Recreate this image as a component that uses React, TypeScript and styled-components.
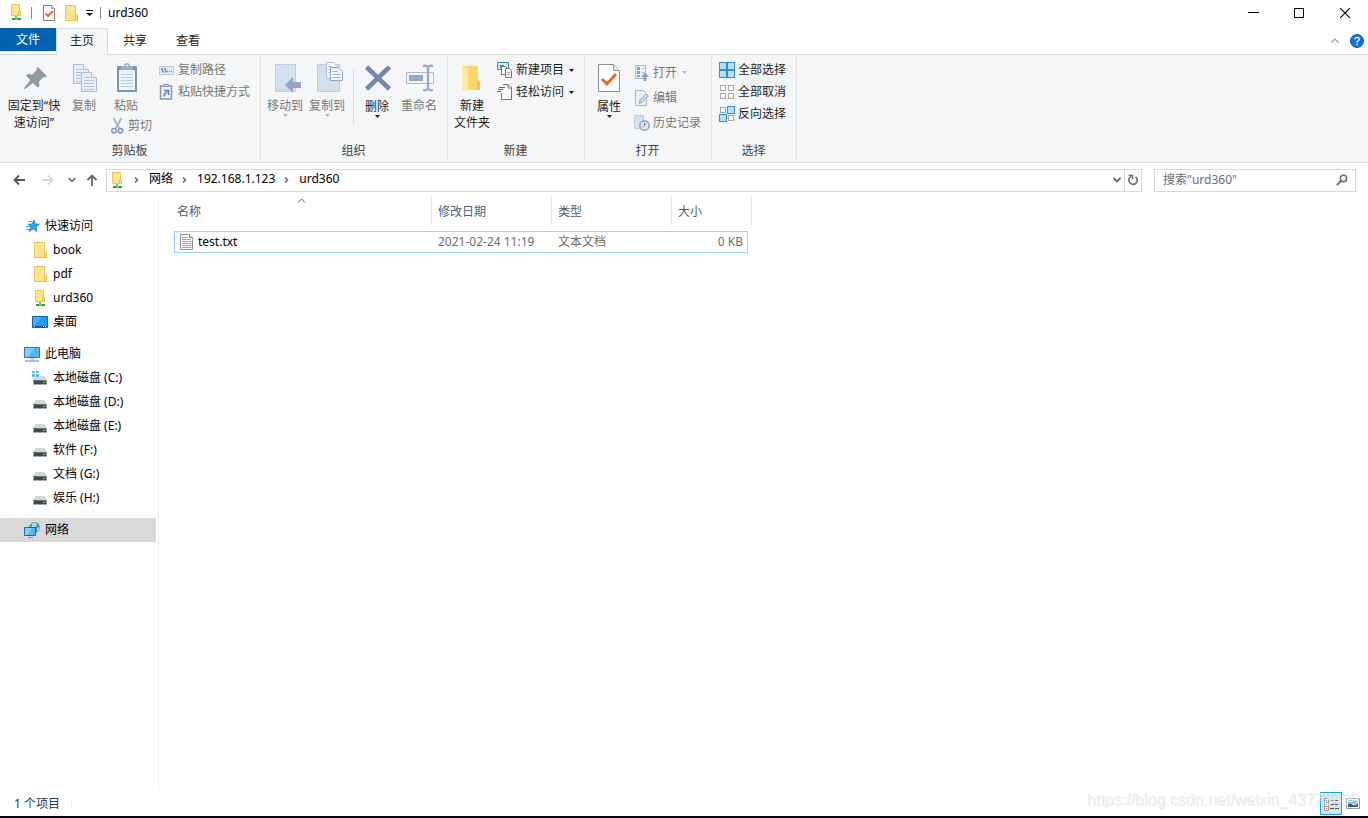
import React from "react";
import styled, { createGlobalStyle, css } from "styled-components";

const GlobalStyle = createGlobalStyle`
  * { box-sizing: border-box; }
  body {
    margin: 0;
    background: #fff;
    color: #000;
    font: 12px/16px "Noto Sans", "Noto Sans CJK SC", sans-serif;
  }
  button, input { font: inherit; color: inherit; }
  svg { display: block; flex: none; }
`;

/* ---------- shared ---------- */

const line = "#dadbdc";

const PlainButton = styled.button`
  display: flex;
  align-items: center;
  margin: 0;
  padding: 0;
  border: 0;
  background: none;
  white-space: nowrap;
`;

/* ---------- window frame ---------- */

const Window = styled.div`
  display: flex;
  flex-direction: column;
  min-height: 100vh;
  border-bottom: 2px solid #05060c;
`;

const TitleBar = styled.header`
  display: flex;
  height: 28px;
`;

const QuickAccess = styled.div`
  display: flex;
  align-items: center;
  flex: 1;
  height: 25px;
  padding-left: 8px;
`;

const QuickButton = styled(PlainButton)<{ $w: number }>`
  justify-content: center;
  width: ${(p) => p.$w}px;
  height: 20px;
`;

const QuickDivider = styled.span<{ $wide?: boolean }>`
  width: 1px;
  height: 12px;
  margin: 0 ${(p) => (p.$wide ? 10 : 7)}px 0 7px;
  background: #8a8a8a;
`;

const Title = styled.h1`
  margin: 0;
  font-size: 12px;
  font-weight: 400;
`;

const CaptionButton = styled(PlainButton)`
  justify-content: center;
  width: 46px;
  height: 25px;
`;

/* ---------- ribbon tabs ---------- */

const TabRow = styled.nav`
  display: flex;
  height: 27px;
  border-bottom: 1px solid ${line};
`;

const FileTab = styled(PlainButton)`
  justify-content: center;
  width: 56px;
  height: 23px;
  padding-top: 1px;
  background: #0063b1;
  color: #fff;
`;

const TabList = styled.div`
  display: flex;
  flex: 1;
  gap: 1px;
`;

const Tab = styled(PlainButton)<{ $active?: boolean }>`
  justify-content: center;
  width: 52px;
  height: 27px;
  padding-bottom: 2px;
  border: 1px solid transparent;
  border-bottom: 0;
  color: #262626;
  ${(p) =>
    p.$active &&
    css`
      border-color: ${line};
      background: #f5f6f7;
    `}
`;

const TabTools = styled.div`
  display: flex;
  align-items: center;
  gap: 10px;
  padding-right: 4px;
`;

/* ---------- ribbon ---------- */

const Ribbon = styled.div`
  display: flex;
  height: 108px;
  padding: 2px 0 3px;
  border-bottom: 1px solid ${line};
  background: #f5f6f7;
`;

const Group = styled.section<{ $w: number; $pad: number }>`
  display: flex;
  flex-direction: column;
  width: ${(p) => p.$w}px;
  padding-left: ${(p) => p.$pad}px;
  border-right: 1px solid #e2e3e4;
`;

const GroupBody = styled.div`
  display: flex;
  flex: 1;
`;

const GroupLabel = styled.h2<{ $pad: number }>`
  margin: 0 1px 0 -${(p) => p.$pad}px;
  color: #444;
  font-size: 12px;
  font-weight: 400;
  text-align: center;
`;

const BigTool = styled(PlainButton)<{ $w: number; $muted?: boolean; $drop?: boolean }>`
  flex-direction: column;
  width: ${(p) => p.$w}px;
  height: 76px;
  padding-top: 5px;
  color: ${(p) => (p.$muted ? "#767676" : "#1e1e1e")};
  line-height: 17px;
`;

const BigText = styled.span<{ $low?: boolean }>`
  margin-top: ${(p) => (p.$low ? 4 : 3)}px;
`;

const PasteStack = styled.div`
  display: flex;
  flex-direction: column;
  width: 50px;
`;

const PasteTool = styled(BigTool)`
  height: 59px;
`;

const ToolColumn = styled.div<{ $pitch: number; $left: number; $top: number }>`
  display: grid;
  grid-auto-rows: ${(p) => p.$pitch}px;
  align-content: start;
  justify-items: start;
  margin-left: ${(p) => p.$left}px;
  padding-top: ${(p) => p.$top}px;
`;

const SmallTool = styled(PlainButton)<{ $muted?: boolean }>`
  gap: 3px;
  color: ${(p) => (p.$muted ? "#767676" : "#1e1e1e")};
`;

const SmallCaret = styled.span`
  margin-left: 2px;
`;

const InnerDivider = styled.span`
  width: 1px;
  height: 55px;
  margin: 13px 2px 0 5px;
  background: #dcdddf;
`;

/* ---------- address bar ---------- */

const AddressRow = styled.div`
  display: flex;
  align-items: center;
  height: 34px;
  padding: 0 12px 0 8px;
`;

const NavButton = styled(PlainButton)<{ $w: number }>`
  justify-content: center;
  width: ${(p) => p.$w}px;
  height: 22px;
`;

const AddressBox = styled.div`
  display: flex;
  align-items: center;
  flex: 1;
  height: 23px;
  padding-left: 2px;
  border: 1px solid #d9d9d9;
`;

const Crumbs = styled.ol`
  display: flex;
  align-items: center;
  flex: 1;
  margin: 0;
  padding: 0 0 2px;
  list-style: none;
`;

const Crumb = styled.li`
  display: flex;
  align-items: center;

  svg { margin: 2px 10px 0 9px; }
`;

const CrumbLink = styled.a`
  color: inherit;
  text-decoration: none;
`;

const AddressButton = styled(PlainButton)<{ $divided?: boolean }>`
  justify-content: center;
  width: ${(p) => (p.$divided ? 17 : 14)}px;
  height: 21px;
  border-left: ${(p) => (p.$divided ? "1px solid #d9d9d9" : "0")};
`;

const SearchBox = styled.label`
  display: flex;
  align-items: center;
  width: 202px;
  height: 23px;
  margin-left: 12px;
  padding: 0 7px 0 8px;
  border: 1px solid #d9d9d9;
`;

const SearchInput = styled.input`
  flex: 1;
  min-width: 0;
  padding: 0;
  border: 0;
  outline: 0;
  background: none;

  &::placeholder { color: #6d6d6d; opacity: 1; }
`;

/* ---------- content ---------- */

const Main = styled.main`
  display: flex;
  flex: 1;
`;

const Sidebar = styled.nav`
  width: 159px;
  padding: 17px 2px 0 0;
  border-right: 1px solid #f0f0f0;
`;

const Tree = styled.ul`
  margin: 0 0 8px;
  padding: 0;
  list-style: none;
`;

const TreeLink = styled.a<{ $child?: boolean; $selected?: boolean }>`
  display: flex;
  align-items: center;
  gap: 5px;
  height: 24px;
  padding-left: ${(p) => (p.$child ? 32 : 24)}px;
  background: ${(p) => (p.$selected ? "#d9d9d9" : "none")};
  color: #000;
  text-decoration: none;
`;

const TreeText = styled.span`
  padding-bottom: 1px;
`;

const FilePane = styled.section`
  flex: 1;
`;

const FileTable = styled.table`
  display: block;
`;

const TableHead = styled.thead`
  display: block;
`;

const TableBody = styled.tbody`
  display: block;
`;

const HeadRow = styled.tr`
  display: grid;
  grid-template-columns: 261px 120px 120px 80px;
  margin-left: 12px;
`;

const HeadCell = styled.th`
  position: relative;
  height: 28px;
  padding: 7px 6px 5px;
  border-right: 1px solid #e5e5e5;
  color: #4c607a;
  font-weight: 400;
  text-align: left;
`;

const SortMark = styled.span`
  position: absolute;
  top: 1px;
  left: 50%;
  margin-left: -4px;
`;

const FileRow = styled.tr`
  display: grid;
  grid-template-columns: 257px 120px 120px 75px;
  width: 574px;
  height: 22px;
  margin: 6px 0 0 15px;
  border: 1px solid #99d1ff;
`;

const FileCell = styled.td<{ $end?: boolean }>`
  padding: ${(p) => (p.$end ? "2px 4px" : "2px 6px")};
  color: #6d6d6d;
  text-align: ${(p) => (p.$end ? "right" : "left")};
`;

const NameCell = styled(FileCell)`
  display: flex;
  align-items: center;
  gap: 5px;
  padding: 0 5px;
  color: #000;
`;

/* ---------- status bar ---------- */

const StatusBar = styled.footer`
  position: relative;
  display: flex;
  align-items: center;
  height: 25px;
  padding: 0 4px 0 14px;
  color: #1e395b;
`;

const StatusText = styled.span`
  flex: 1;
`;

const StatusCount = styled.span`
  display: inline-block;
  padding-right: 11px;
  border-right: 1px solid #f0f0f0;
  line-height: 12px;
`;

const ViewButton = styled(PlainButton)<{ $active?: boolean }>`
  justify-content: center;
  width: 22px;
  height: 23px;
  border: 1px solid ${(p) => (p.$active ? "#26a0da" : "transparent")};
  background: ${(p) => (p.$active ? "#cbe8f6" : "none")};
`;

const Watermark = styled.span`
  position: absolute;
  right: 9px;
  bottom: 7px;
  color: rgba(240, 240, 240, 0.8);
  font: 16px/18px "Liberation Sans", Arial, sans-serif;
  text-shadow: 1px 1px 0 rgba(190, 190, 190, 0.35);
  pointer-events: none;
`;

/* ---------- icons ---------- */

const FolderIcon = () => (
  <svg width="16" height="16" viewBox="0 0 16 16">
    <path d="M2.500.5h10v9.500h2v5.500h-12z" fill="#ffe38f" stroke="#ecc54e" />
    <path d="M12.500 15.500v-5l1-1 1 1v5z" fill="#fbe9a8" stroke="#e8bd3c" />
  </svg>
);

const NetFolderIcon = () => (
  <svg width="16" height="17" viewBox="0 0 16 17">
    <path d="M3.500.5h8v7h1v4h-9z" fill="#ffe38f" stroke="#ecc54e" />
    <path d="M10.500 11v-3l1-1 1 1v3z" fill="#fbe9a8" stroke="#e8bd3c" />
    <path d="M7 12h2v2h-2z" fill="#5bd052" />
    <path d="M4 14h9v2H4z" fill="#2aa52e" />
    <path d="M7 14h3v2H7z" fill="#5bd052" />
  </svg>
);

const SmallCheckDocIcon = () => (
  <svg width="12" height="16" viewBox="0 0 12 16">
    <path d="M.5.5h8l3 3v12H.5z" fill="#fcfcfc" stroke="#7d7d7d" />
    <path d="M8.500.5v3h3" fill="#e8e8e8" stroke="#9a9a9a" />
    <path d="M2.500 8.500L5 11l5-5" fill="none" stroke="#f26522" strokeWidth="1.900" />
  </svg>
);

const CheckDocIcon = () => (
  <svg width="22" height="32" viewBox="0 0 22 32">
    <path d="M.5 2.500h15l6 6v21H.5z" fill="#fcfcfc" stroke="#8b8b8b" />
    <path d="M15.500 2.500v6h6" fill="#e8e8e8" stroke="#9a9a9a" />
    <path d="M4 17l5 5 9-10" fill="none" stroke="#f26522" strokeWidth="2.800" />
  </svg>
);

const Caret = ({ color = "#1e1e1e" }: { color?: string }) => (
  <svg width="5" height="3" viewBox="0 0 5 3"><path d="M0 0h5L2.500 3z" fill={color} /></svg>
);

const CustomizeIcon = () => (
  <svg width="7" height="6" viewBox="0 0 7 6"><path d="M0 0h7v1H0zM0 3h7L3.500 6z" fill="#111" /></svg>
);

const PinIcon = () => (
  <svg width="32" height="32" viewBox="0 0 32 32">
    <path d="M20 5l9 9-2 1.500-1.500-.5-4.500 4.500.5 4.500-2 1.500-4.500-4.500L7 27H6v-1l6.500-8L8 13.500 9.500 12l5 .5 4.500-5-.5-1.500z" fill="#8f9aa1" />
  </svg>
);

const page = (x: number, y: number) => (
  <g transform={`translate(${x} ${y})`}>
    <path d="M.5.5h10l5 5v14H.5z" fill="#e8eef8" stroke="#a9bbd7" />
    <path d="M10.500.5v5h5" fill="#f5f8fc" stroke="#a9bbd7" />
    <path d="M3 5.500h6M3 8.500h10M3 11.500h10M3 14.500h10M3 17.500h10" stroke="#b2c2dc" />
  </g>
);

const CopyIcon = () => (
  <svg width="32" height="32" viewBox="0 0 32 32">{page(5, 2)}{page(13, 10)}</svg>
);

const PasteIcon = () => (
  <svg width="32" height="32" viewBox="0 0 32 32">
    <g transform="translate(1 0)">
      <rect x="6" y="4" width="20" height="26" rx="1" fill="#7c92b9" />
      <path d="M8 8h16v20H8z" fill="#edf2fa" />
      <path d="M10 12.500h12M10 15.500h12M10 18.500h12M10 21.500h12M10 24.500h12" stroke="#c0cde2" />
      <path d="M10 4h3c0-4 6-4 6 0h3v4H10z" fill="#9eafc9" />
      <circle cx="16" cy="3.500" r="1" fill="#eef2f8" />
    </g>
  </svg>
);

const ScissorsIcon = () => (
  <svg width="14" height="16" viewBox="0 0 14 16">
    <path d="M2.500 0l6 10.500M10.500 0l-6 10.500" stroke="#a3b2cb" strokeWidth="1.800" />
    <circle cx="3" cy="12.700" r="2.200" fill="none" stroke="#8297bb" strokeWidth="1.600" />
    <circle cx="9.500" cy="12.700" r="2.200" fill="none" stroke="#8297bb" strokeWidth="1.600" />
  </svg>
);

const PathIcon = () => (
  <svg width="16" height="16" viewBox="0 0 16 16">
    <path d="M.5 4.500h14v8H.5z" fill="#dfe8f5" stroke="#bccbe2" />
    <path d="M2.500 6l2 4.500M5.500 6l2 4.500" stroke="#667fab" strokeWidth="1.300" />
    <path d="M8 9h1v1H8zM10 9h1v1h-1zM12 9h1v1h-1z" fill="#667fab" />
  </svg>
);

const PasteShortcutIcon = () => (
  <svg width="16" height="16" viewBox="0 0 16 16">
    <path d="M1.500 2h11v13h-11z" fill="#eef3fa" stroke="#8196bb" strokeWidth="1.500" />
    <path d="M4.500.500h5v2h-5z" fill="#b5c3da" stroke="#8fa2c3" />
    <path d="M5 12.500c0-2 .5-3 3-5M5 6.500h4.500v4.500" fill="none" stroke="#5f7cb0" strokeWidth="1.600" />
  </svg>
);

const MoveToIcon = () => (
  <svg width="32" height="32" viewBox="0 0 32 32">
    <path d="M6.500 2.500h20v27h-20z" fill="#d5e0ef" stroke="#bdcce2" />
    <path d="M6.500 27.500h20" stroke="#c5d2e6" />
    <path d="M16 23l8-8v5h8v6h-8v5z" fill="#94a7c7" />
  </svg>
);

const CopyToIcon = () => (
  <svg width="32" height="32" viewBox="0 0 32 32">
    <path d="M6.500 2.500h22v27h-22z" fill="#d5e0ef" stroke="#bdcce2" />
    <path d="M15.500.5h7l4 4v12h-11z" fill="#f1f5fa" stroke="#a9bbd7" />
    <path d="M19.500 5.500h8l4 4v9h-12z" fill="#f1f5fa" stroke="#8fa4c8" />
    <path d="M17.500 4.500h3M17.500 7.500h2M17.500 10.500h2M21.500 9.500h5M21.500 12.500h8M21.500 15.500h8" stroke="#9cafce" />
  </svg>
);

const DeleteIcon = () => (
  <svg width="32" height="32" viewBox="0 0 32 32">
    <path d="M5.500 5l23 22M28.500 5l-23 22" stroke="#7387ad" strokeWidth="4.500" />
  </svg>
);

const RenameIcon = () => (
  <svg width="32" height="32" viewBox="0 0 32 32">
    <path d="M3.500 10.500h27v11h-27z" fill="#f4f7fb" stroke="#a9bad5" />
    <path d="M6 13h14v6H6z" fill="#93a7ca" />
    <path d="M20 4c3-1 4 0 5 1.500C26 4 27 3 30 4M25 5v21M20 28c3 1 4 0 5-1.500 1 1.500 2 2.500 5 1.500" fill="none" stroke="#93a7c8" strokeWidth="2.200" />
  </svg>
);

const NewFolderIcon = () => (
  <svg width="32" height="32" viewBox="0 0 32 32">
    <path d="M6 4h16v14l2 2v8H6z" fill="#fbd66d" />
    <path d="M6 4l6 3v23l-6-3z" fill="#ffeaa6" />
    <path d="M21 17l3 3v8h-3z" fill="#f3c650" />
  </svg>
);

const NewItemIcon = () => (
  <svg width="16" height="16" viewBox="0 0 16 16">
    <path d="M.5.5h11v7H.5z" fill="#d7eff5" stroke="#3e8ba8" />
    <path d="M3 3h4v3H3z" fill="#4a7ead" />
    <path d="M4.500 4.500h4l2 2v6h-6z" fill="#fff" stroke="#777" />
    <path d="M8.500 6.500h4l2 2v7h-6z" fill="#fff" stroke="#777" />
    <path d="M10 10.500h3M10 12.500h3" stroke="#d59c92" />
  </svg>
);

const EasyAccessIcon = () => (
  <svg width="16" height="16" viewBox="0 0 16 16">
    <path d="M6 .5h5l3.500 3v12h-10V9" fill="#fbfbfb" stroke="#777" />
    <path d="M11 .5v3.500h3.500" fill="none" stroke="#777" />
    <path d="M2 3.500h6M1 5.500h5M0 7.500h4" stroke="#2473b8" strokeWidth="1.200" />
  </svg>
);

const OpenIcon = () => (
  <svg width="16" height="16" viewBox="0 0 16 16">
    <path d="M1.500.5h10v13h-10z" fill="#ecf1f8" stroke="#a5b7d3" />
    <path d="M3 2h3v3H3zM3 6h3v3H3zM3 10h3v2H3z" fill="#8ba1c6" />
    <path d="M8 3.500h2M8 7.500h2" stroke="#a5b7d3" />
    <path d="M7 12l4-4.500 4 4.500h-2.500v4h-3v-4z" fill="#8ca1c3" />
  </svg>
);

const EditIcon = () => (
  <svg width="16" height="16" viewBox="0 0 16 16">
    <path d="M1.500.5h8l3 3v12h-11z" fill="#e9f0f8" stroke="#a5b7d3" />
    <path d="M5 13.500l1-3.500 6-6 2.500 2-6 6z" fill="#c9d7ea" stroke="#94a8c9" />
  </svg>
);

const HistoryIcon = () => (
  <svg width="16" height="16" viewBox="0 0 16 16">
    <path d="M.5.5h9v13h-9z" fill="#d5e0ef" stroke="#bccbe1" />
    <circle cx="10.500" cy="10.500" r="4.700" fill="#dfe7f3" stroke="#8c9fc0" strokeWidth="1.500" />
    <path d="M10.500 7.500v3l-2 1.500M10.500 10.500l2-2" fill="none" stroke="#7288b0" />
  </svg>
);

const SelectIcon = ({ on }: { on: boolean[] }) => (
  <svg width="16" height="16" viewBox="0 0 16 16">
    {on.map((active, i) => {
      const x = i % 2 ? 8 : 0;
      const y = i > 1 ? 8 : 0;
      return active ? (
        <rect key={i} x={x + 0.5} y={y + 0.5} width="7" height="7" fill="#b5dffb" stroke="#2b8fdb" />
      ) : (
        <rect key={i} x={x + 1.5} y={y + 1.5} width="5" height="5" fill="#fff" stroke="#a5a5a5" />
      );
    })}
  </svg>
);

const ArrowIcon = ({ dir, color }: { dir: "left" | "right" | "up"; color: string }) => (
  <svg width="14" height="14" viewBox="0 0 14 14">
    <g transform={dir === "right" ? "rotate(180 7 7)" : dir === "up" ? "rotate(90 7 7)" : undefined}>
      <path d="M2 7h11M7 2.500L2.500 7 7 11.500" fill="none" stroke={color} strokeWidth="1.800" />
    </g>
  </svg>
);

type ChevronProps = { dir: "down" | "up" | "right"; color?: string; w?: number; stroke?: number };

const ChevronIcon = ({ dir, color = "#6b6b6b", w = 8, stroke = 1.5 }: ChevronProps) =>
  dir === "right" ? (
    <svg width="5" height="6" viewBox="0 0 5 6"><path d="M1 .5L3.500 3 1 5.500" fill="none" stroke={color} strokeWidth="1.500" /></svg>
  ) : (
    <svg width={w} height="6" viewBox="0 0 8 6">
      <path d={dir === "down" ? "M.5 1L4 4.500 7.500 1" : "M.5 4.500L4 1l3.500 3.500"} fill="none" stroke={color} strokeWidth={stroke} />
    </svg>
  );

const RefreshIcon = () => (
  <svg width="12" height="12" viewBox="0 0 12 12">
    <path d="M8.500 2.800A4.200 4.200 0 1 1 3.800 2.600" fill="none" stroke="#6b6b6b" strokeWidth="1.600" />
    <path d="M1.500 1.500h4v4" fill="none" stroke="#6b6b6b" strokeWidth="1.500" />
  </svg>
);

const SearchIcon = () => (
  <svg width="12" height="12" viewBox="0 0 12 12">
    <circle cx="7.500" cy="4.500" r="3.200" fill="none" stroke="#6b6b6b" strokeWidth="1.500" />
    <path d="M5 7L.8 11.200" stroke="#6b6b6b" strokeWidth="1.900" />
  </svg>
);

const HelpIcon = () => (
  <svg width="14" height="14" viewBox="0 0 14 14">
    <circle cx="7" cy="7" r="6.500" fill="#0a78d6" stroke="#0a5da8" />
    <path d="M5 5.300c0-2.600 4.200-2.600 4.200 0 0 1.500-2.100 1.400-2.100 3.200M7.100 9.800v1.500" fill="none" stroke="#fff" strokeWidth="1.400" />
  </svg>
);

const StarIcon = () => (
  <svg width="16" height="16" viewBox="0 0 16 16">
    <path d="M10 2l1.200 4 4.300.2-3.600 2.600 1 4.700-3.800-2.700-4 2.700 1.800-4.600L4 6.200l4-.2z" fill="#2aa5f0" stroke="#1581cb" strokeWidth=".8" />
    <path d="M4 3.500h4M2 8.500h4M2 11.500h4" stroke="#5da9dc" />
  </svg>
);

const DesktopIcon = () => (
  <svg width="16" height="16" viewBox="0 0 16 16">
    <path d="M.5 2.500h15v11H.5z" fill="#1a9cf8" stroke="#0867b4" />
    <path d="M1 3h9l-7 8H1z" fill="#43b2ff" />
    <path d="M1 12h14v1H1z" fill="#0a4e8c" />
    <path d="M2 12h1v1H2zM11 12h1v1h-1zM13 12h1v1h-1z" fill="#fff" />
  </svg>
);

const ComputerIcon = () => (
  <svg width="16" height="16" viewBox="0 0 16 16">
    <path d="M.5 1.500h15v10H.5z" fill="#4fb7f7" stroke="#37789f" />
    <path d="M1 2h9l-6 9H1z" fill="#83cffb" />
    <path d="M6 12h4v1.500H6z" fill="#b9c6cf" />
    <path d="M1 15h14" stroke="#8499a6" strokeWidth="1.200" />
  </svg>
);

const DriveIcon = ({ system }: { system?: boolean }) => (
  <svg width="16" height="16" viewBox="0 0 16 16">
    <path d="M3.500 6h9l2 4h-13z" fill="#d3d5d7" />
    <path d="M1.500 10h13v4.500h-13z" fill="#45484a" />
    <path d="M1.500 10h13v1h-13z" fill="#6d7072" />
    <path d="M11 12h2v1h-2z" fill="#5ee25b" />
    {system && <path d="M0 1h3v2H0zM4 1h3v2H4zM0 4h3v3H0zM4 4h3v3H4z" fill="#12aef0" stroke="#fff" strokeWidth=".4" />}
  </svg>
);

const NetworkIcon = () => (
  <svg width="16" height="16" viewBox="0 0 16 16">
    <circle cx="10.500" cy="5.500" r="5.300" fill="#3f8fb5" />
    <path d="M8 1.500c2-1 5-.5 5 1.500s-2 1-3 3-3-1-2-4.500zM13 6l2.500-1c0 2-1 4-2.500 4.500z" fill="#a8dbe9" />
    <path d="M.5 5.500h11v8H.5z" fill="#53b9f7" stroke="#27668f" />
    <path d="M1 6h7l-5 7H1z" fill="#8ad0fa" />
    <path d="M4 15.500h5" stroke="#8297a3" />
  </svg>
);

const TextFileIcon = () => (
  <svg width="13" height="16" viewBox="0 0 13 16">
    <path d="M.5.5h9l3 3v12H.5z" fill="#fcfcfc" stroke="#8f8f8f" />
    <path d="M9.500.5v3h3" fill="#e5e5e5" stroke="#8f8f8f" />
    <path d="M2 3.500h6M2 5.500h9M2 7.500h9M2 9.500h9M2 11.500h9M2 13.500h9" stroke="#a3a3a3" />
  </svg>
);

const DetailsIcon = () => (
  <svg width="17" height="14" viewBox="0 0 17 14">
    <path d="M1.500 1.500h4v4h-4zM1.500 5.500h4v4h-4zM1.500 9.500h4v4h-4z" fill="#fff" stroke="#999" />
    <path d="M3 3h1v1H3zM3 7h1v1H3z" fill="#2f7cb0" />
    <path d="M3 11h1v1H3z" fill="#d33" />
    <path d="M7 3.500h4M12 3.500h4M7 7.500h4M12 7.500h4M7 11.500h4M12 11.500h4" stroke="#555" />
  </svg>
);

const ThumbsIcon = () => (
  <svg width="14" height="11" viewBox="0 0 14 11">
    <path d="M.5.5h13v10H.5z" fill="#fff" stroke="#999" />
    <path d="M2 2h10v7H2z" fill="#7fb4ec" />
    <path d="M2 9V5l3 1 3 1 4-2v4z" fill="#2c5a74" />
    <path d="M3 3h4v1H3z" fill="#fff" />
  </svg>
);

/* ---------- sections ---------- */

const RibbonGroup = ({ label, w, pad, children }: { label: string; w: number; pad: number; children: React.ReactNode }) => (
  <Group $w={w} $pad={pad}>
    <GroupBody>{children}</GroupBody>
    <GroupLabel $pad={pad}>{label}</GroupLabel>
  </Group>
);

type BigProps = { icon: React.ReactNode; label: React.ReactNode; w?: number; muted?: boolean; caret?: boolean };

const Big = ({ icon, label, w = 42, muted, caret }: BigProps) => (
  <BigTool $w={w} $muted={muted}>
    {icon}
    <BigText $low={caret && !muted}>{label}</BigText>
    {caret && <Caret color={muted ? "#b5b5b5" : "#1e1e1e"} />}
  </BigTool>
);

type SmallProps = { icon: React.ReactNode; label: string; muted?: boolean; caret?: boolean };

const Small = ({ icon, label, muted, caret }: SmallProps) => (
  <SmallTool $muted={muted}>
    {icon}
    <span>{label}</span>
    {caret && <SmallCaret><Caret color={muted ? "#b5b5b5" : "#1e1e1e"} /></SmallCaret>}
  </SmallTool>
);

const sidebar = [
  {
    root: { label: "快速访问", icon: <StarIcon /> },
    items: [
      { label: "book", icon: <FolderIcon /> },
      { label: "pdf", icon: <FolderIcon /> },
      { label: "urd360", icon: <NetFolderIcon /> },
      { label: "桌面", icon: <DesktopIcon /> },
    ],
  },
  {
    root: { label: "此电脑", icon: <ComputerIcon /> },
    items: [
      { label: "本地磁盘 (C:)", icon: <DriveIcon system /> },
      { label: "本地磁盘 (D:)", icon: <DriveIcon /> },
      { label: "本地磁盘 (E:)", icon: <DriveIcon /> },
      { label: "软件 (F:)", icon: <DriveIcon /> },
      { label: "文档 (G:)", icon: <DriveIcon /> },
      { label: "娱乐 (H:)", icon: <DriveIcon /> },
    ],
  },
  { root: { label: "网络", icon: <NetworkIcon />, selected: true }, items: [] },
];

const crumbs = ["网络", "192.168.1.123", "urd360"];

export default function App() {
  return (
    <Window>
      <GlobalStyle />
      <TitleBar>
        <QuickAccess>
          <NetFolderIcon />
          <QuickDivider $wide />
          <QuickButton $w={14} aria-label="属性"><SmallCheckDocIcon /></QuickButton>
          <QuickButton $w={30} aria-label="新建文件夹"><FolderIcon /></QuickButton>
          <QuickButton $w={7} aria-label="自定义快速访问工具栏"><CustomizeIcon /></QuickButton>
          <QuickDivider />
          <Title>urd360</Title>
        </QuickAccess>
        <CaptionButton aria-label="最小化">
          <svg width="12" height="10"><path d="M1 4.500h11" stroke="#000" /></svg>
        </CaptionButton>
        <CaptionButton aria-label="最大化">
          <svg width="10" height="10"><path d="M.5.5h9v9h-9z" fill="none" stroke="#000" /></svg>
        </CaptionButton>
        <CaptionButton aria-label="关闭">
          <svg width="10" height="10"><path d="M0 0l10 10M10 0L0 10" stroke="#000" strokeWidth="1.100" /></svg>
        </CaptionButton>
      </TitleBar>

      <TabRow>
        <FileTab>文件</FileTab>
        <TabList>
          <Tab $active>主页</Tab>
          <Tab>共享</Tab>
          <Tab>查看</Tab>
        </TabList>
        <TabTools>
          <PlainButton aria-label="折叠功能区"><ChevronIcon dir="up" color="#9a9a9a" w={10} stroke={1.2} /></PlainButton>
          <PlainButton aria-label="帮助"><HelpIcon /></PlainButton>
        </TabTools>
      </TabRow>

      <Ribbon>
        <RibbonGroup label="剪贴板" w={261} pad={5}>
          <Big icon={<PinIcon />} w={58} label={<>固定到“快<br />速访问”</>} />
          <Big icon={<CopyIcon />} label="复制" muted />
          <PasteStack>
            <PasteTool $w={42} $muted>
              <PasteIcon />
              <BigText>粘贴</BigText>
            </PasteTool>
            <ToolColumn $pitch={20} $left={6} $top={0}>
              <Small icon={<ScissorsIcon />} label="剪切" muted />
            </ToolColumn>
          </PasteStack>
          <ToolColumn $pitch={22} $left={4} $top={2}>
            <Small icon={<PathIcon />} label="复制路径" muted />
            <Small icon={<PasteShortcutIcon />} label="粘贴快捷方式" muted />
          </ToolColumn>
        </RibbonGroup>

        <RibbonGroup label="组织" w={187} pad={3}>
          <Big icon={<MoveToIcon />} label="移动到" muted caret />
          <Big icon={<CopyToIcon />} label="复制到" muted caret />
          <InnerDivider />
          <Big icon={<DeleteIcon />} label="删除" caret />
          <Big icon={<RenameIcon />} label="重命名" muted />
        </RibbonGroup>

        <RibbonGroup label="新建" w={137} pad={3}>
          <Big icon={<NewFolderIcon />} label={<>新建<br />文件夹</>} />
          <ToolColumn $pitch={22} $left={4} $top={2}>
            <Small icon={<NewItemIcon />} label="新建项目" caret />
            <Small icon={<EasyAccessIcon />} label="轻松访问" caret />
          </ToolColumn>
        </RibbonGroup>

        <RibbonGroup label="打开" w={127} pad={3}>
          <Big icon={<CheckDocIcon />} label="属性" caret />
          <ToolColumn $pitch={25} $left={4} $top={3}>
            <Small icon={<OpenIcon />} label="打开" muted caret />
            <Small icon={<EditIcon />} label="编辑" muted />
            <Small icon={<HistoryIcon />} label="历史记录" muted />
          </ToolColumn>
        </RibbonGroup>

        <RibbonGroup label="选择" w={85} pad={3}>
          <ToolColumn $pitch={22} $left={4} $top={2}>
            <Small icon={<SelectIcon on={[true, true, true, true]} />} label="全部选择" />
            <Small icon={<SelectIcon on={[false, false, false, false]} />} label="全部取消" />
            <Small icon={<SelectIcon on={[false, true, true, false]} />} label="反向选择" />
          </ToolColumn>
        </RibbonGroup>
      </Ribbon>

      <AddressRow>
        <NavButton $w={22} aria-label="后退"><ArrowIcon dir="left" color="#555" /></NavButton>
        <NavButton $w={36} aria-label="前进"><ArrowIcon dir="right" color="#d5d5d5" /></NavButton>
        <NavButton $w={12} aria-label="最近浏览的位置"><ChevronIcon dir="down" w={8} /></NavButton>
        <NavButton $w={28} aria-label="上移"><ArrowIcon dir="up" color="#666" /></NavButton>
        <AddressBox>
          <NetFolderIcon />
          <Crumbs>
            {crumbs.map((name) => (
              <Crumb key={name}>
                <ChevronIcon dir="right" />
                <CrumbLink href="#">{name}</CrumbLink>
              </Crumb>
            ))}
          </Crumbs>
          <AddressButton aria-label="以前的位置"><ChevronIcon dir="down" w={10} stroke={1.8} /></AddressButton>
          <AddressButton $divided aria-label="刷新"><RefreshIcon /></AddressButton>
        </AddressBox>
        <SearchBox>
          <SearchInput type="text" aria-label="搜索" placeholder={'搜索"urd360"'} />
          <SearchIcon />
        </SearchBox>
      </AddressRow>

      <Main>
        <Sidebar>
          {sidebar.map(({ root, items }) => (
            <Tree key={root.label}>
              <li>
                <TreeLink href="#" $selected={"selected" in root}>
                  {root.icon}
                  <TreeText>{root.label}</TreeText>
                </TreeLink>
              </li>
              {items.map((item) => (
                <li key={item.label}>
                  <TreeLink href="#" $child>
                    {item.icon}
                    <TreeText>{item.label}</TreeText>
                  </TreeLink>
                </li>
              ))}
            </Tree>
          ))}
        </Sidebar>
        <FilePane>
          <FileTable>
            <TableHead>
              <HeadRow>
                <HeadCell>名称<SortMark><ChevronIcon dir="up" color="#555" w={9} stroke={1} /></SortMark></HeadCell>
                <HeadCell>修改日期</HeadCell>
                <HeadCell>类型</HeadCell>
                <HeadCell>大小</HeadCell>
              </HeadRow>
            </TableHead>
            <TableBody>
              <FileRow>
                <NameCell><TextFileIcon />test.txt</NameCell>
                <FileCell>2021-02-24 11:19</FileCell>
                <FileCell>文本文档</FileCell>
                <FileCell $end>0 KB</FileCell>
              </FileRow>
            </TableBody>
          </FileTable>
        </FilePane>
      </Main>

      <StatusBar>
        <StatusText><StatusCount>1 个项目</StatusCount></StatusText>
        <ViewButton $active aria-label="详细信息"><DetailsIcon /></ViewButton>
        <ViewButton aria-label="大缩略图"><ThumbsIcon /></ViewButton>
        <Watermark>https://blog.csdn.net/weixin_43773499</Watermark>
      </StatusBar>
    </Window>
  );
}
